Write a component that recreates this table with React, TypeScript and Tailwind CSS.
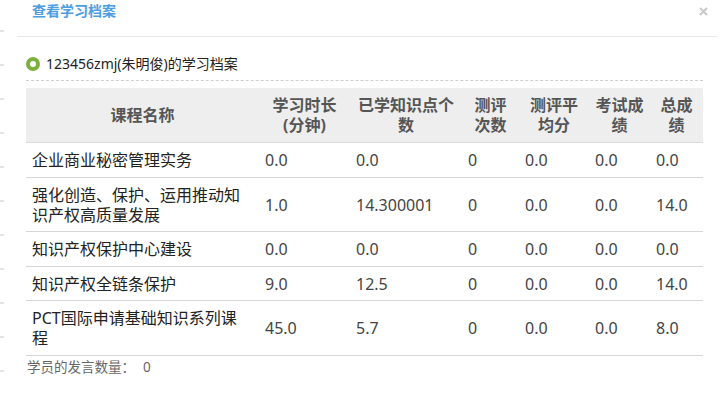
const font = { fontFamily: '"Noto Sans", "Noto Sans CJK SC", sans-serif' };

const headers = ["课程名称", "学习时长(分钟)", "已学知识点个数", "测评次数", "测评平均分", "考试成绩", "总成绩"];

const rows = [
  ["企业商业秘密管理实务", "0.0", "0.0", "0", "0.0", "0.0", "0.0"],
  ["强化创造、保护、运用推动知识产权高质量发展", "1.0", "14.300001", "0", "0.0", "0.0", "14.0"],
  ["知识产权保护中心建设", "0.0", "0.0", "0", "0.0", "0.0", "0.0"],
  ["知识产权全链条保护", "9.0", "12.5", "0", "0.0", "0.0", "14.0"],
  ["PCT国际申请基础知识系列课程", "45.0", "5.7", "0", "0.0", "0.0", "8.0"],
];

const widths = [233, 91, 112, 57, 70, 61, 53];

export default function App() {
  return (
    <div className="flex w-[725px] h-[413px] bg-white overflow-hidden" style={font}>
      {/* page behind the dialog */}
      <div className="w-[6px] flex flex-col gap-[32px] pt-[30px]">
        {Array.from({ length: 11 }).map((_, i) => (
          <div key={i} className="h-[2px] w-[4px] bg-[#e4e4e4]" />
        ))}
      </div>

      <div className="ml-[11px] mr-[8px] flex-1 flex flex-col">
        <div className="h-[37px] border-b border-[#e8e8e8] flex items-start justify-between">
          <span className="pl-[15px] pt-[1px] text-[14px] leading-[20px] font-semibold text-[#4d9de3]">
            查看学习档案
          </span>
          <svg width="9" height="9" viewBox="0 0 9 9" className="mt-[7px] mr-[9px]">
            <path d="M1 1L8 8M8 1L1 8" stroke="#c9c9c9" strokeWidth="2" />
          </svg>
        </div>

        <div className="pl-[9px] pr-[14px]">
          <div className="mt-[17px] flex items-center gap-[6px] h-[20px]">
            <span className="w-[14px] h-[14px] rounded-full border-4 border-[#7db13d]" />
            <span className="text-[14px] leading-[20px] text-[#222]">123456zmj(朱明俊)的学习档案</span>
          </div>
          <div className="mt-[6px] border-t border-dashed border-[#cfcfcf]" />

          <table className="mt-[7px] w-[677px] table-fixed border-collapse text-[16px] leading-[20px]">
            <colgroup>
              {widths.map((w, i) => (
                <col key={i} style={{ width: w }} />
              ))}
            </colgroup>
            <thead>
              <tr className="bg-[#eeeeee] border-b border-[#dcdcdc]">
                {headers.map((h, i) => (
                  <th key={i} className="px-[6px] pt-[7px] pb-[7px] text-center font-bold text-[#555]">
                    {h}
                  </th>
                ))}
              </tr>
            </thead>
            <tbody>
              {rows.map((r, ri) => (
                <tr key={ri} className="border-b border-[#d6d6d6]">
                  {r.map((c, ci) => (
                    <td
                      key={ci}
                      className={`pt-[7px] pb-[6.5px] text-left align-middle ${
                        ci === 0 ? "pl-[6px] pr-[10px] text-[#222]" : "px-[6px] text-[#444]"
                      }`}
                    >
                      {c}
                    </td>
                  ))}
                </tr>
              ))}
            </tbody>
          </table>

          <div className="mt-[1px] pl-[1px] text-[13.5px] leading-[20px] text-[#666]">
            学员的发言数量：<span className="ml-[8px]">0</span>
          </div>
        </div>
      </div>
    </div>
  );
}
